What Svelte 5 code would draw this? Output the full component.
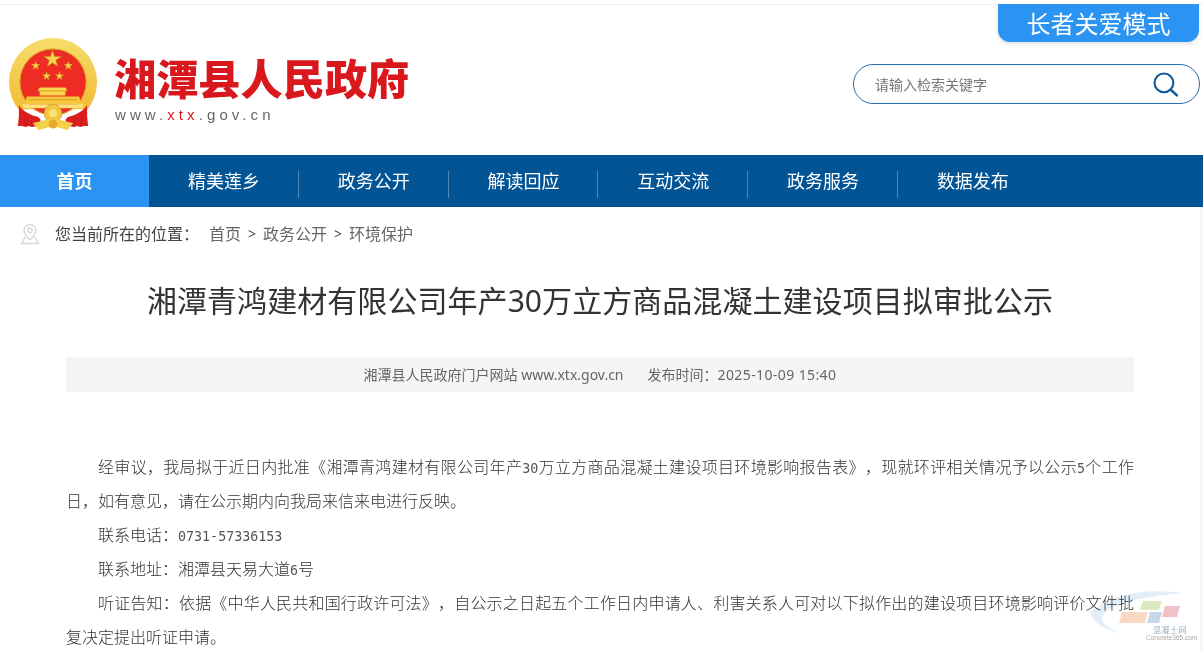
<!--
  Article page of the county government site: header, nav, breadcrumb, article body.
-->
<script>
    const navItems = ['精美莲乡', '政务公开', '解读回应', '互动交流', '政务服务', '数据发布'];
    const crumbs = ['首页', '政务公开', '环境保护'];

    // Five-pointed star as a polygon points string
    function star(cx, cy, r) {
        const pts = [];
        for (let i = 0; i < 10; i++) {
            const rad = i % 2 === 0 ? r : r * 0.382;
            const a = -Math.PI / 2 + (i * Math.PI) / 5;
            pts.push(`${(cx + rad * Math.cos(a)).toFixed(2)},${(cy + rad * Math.sin(a)).toFixed(2)}`);
        }
        return pts.join(' ');
    }

    const stars = [
        { x: 27, y: 28, r: 4.6 },
        { x: 60, y: 28, r: 4.6 },
        { x: 38, y: 38.500, r: 4.6 },
        { x: 51, y: 38.500, r: 4.6 },
    ];
</script>

<div class="page">
    <header class="top">
        <a class="care" href="#care">长者关爱模式</a>
        <div class="brand">
            <svg class="emblem" viewBox="0 0 90 96" aria-hidden="true">
                <defs>
                    <linearGradient id="gold" x1="0" y1="0" x2="0" y2="1">
                        <stop offset="0" stop-color="#f7dc6a" />
                        <stop offset="1" stop-color="#efb62c" />
                    </linearGradient>
                    <clipPath id="ring-clip"><rect x="0" y="0" width="90" height="72" /></clipPath>
                </defs>
                <g clip-path="url(#ring-clip)">
                    <circle cx="44.500" cy="44.500" r="44.500" fill="url(#gold)" />
                </g>
                <circle cx="44.500" cy="44.500" r="33.500" fill="#ee2c24" stroke="#dca325" stroke-width="1" />
                <polygon points={star(44, 21.500, 9)} fill="#f8d54a" stroke="#c58d1c" stroke-width=".5" />
                {#each stars as s}
                    <polygon points={star(s.x, s.y, s.r)} fill="#f8d54a" stroke="#c58d1c" stroke-width=".3" />
                {/each}
                <path fill="#f8d54a" d="M31 50h26l2 3h-2v5H31v-5h-2z" />
                <path fill="#f6c93c" d="M18 59h53l2 8H16z" />
                <path fill="#d8a024" d="M29 53h30v1H29zM20 62h49v1H20z" />
                <path fill="#fbe27a" d="M13 67h63l-2 4H15z" />
                <path fill="#dc1f1e" d="M10 68c5 7 12 10 20 12l2 3-3 6-6 1-3-1-3 1-4-1-4 0 1-10z" />
                <path fill="#dc1f1e" d="M79 68c-5 7-12 10-20 12l-2 3 3 6 6 1 3-1 3 1 4-1 4 0-1-10z" />
                <path fill="#b8141a" d="M15 74l1 15h1zM22 79l1 10h1zM74 74l-1 15h-1zM67 79l-1 10h-1z" />
                <circle cx="44.500" cy="76" r="9" fill="#f3c53e" stroke="#c58d1c" stroke-width="1" stroke-dasharray="2 1" />
                <circle cx="44.500" cy="76" r="4" fill="#fbe27a" />
                <path fill="#f6cf4a" d="M24 86c7-1 14-4 20.500-4S58 85 65 86l-6 7-14.500-4L30 93z" />
                <circle cx="44.500" cy="87" r="4.500" fill="#e8a92a" />
            </svg>
            <div class="brand-text">
                <div class="site-name">湘潭县人民政府</div>
                <div class="site-url">www.<span>xtx</span>.gov.cn</div>
            </div>
        </div>
        <form class="search">
            <span class="placeholder">请输入检索关键字</span>
            <svg viewBox="0 0 24 24" width="25" height="25" aria-hidden="true">
                <circle cx="10.500" cy="10.500" r="9" fill="none" stroke="#0f5a9e" stroke-width="2" />
                <path d="M17 17l6 5.500" fill="none" stroke="#0f5a9e" stroke-width="2.400" stroke-linecap="round" />
            </svg>
        </form>
    </header>

    <nav class="nav">
        <a class="nav-home" href="#home">首页</a>
        {#each navItems as item, i}
            <a class="nav-item" class:last={i === navItems.length - 1} href="#nav">{item}</a>
        {/each}
    </nav>

    <div class="crumbs">
        <svg viewBox="0 0 22 24" width="20" height="22" aria-hidden="true">
            <path d="M11 1.500a6.500 6.500 0 0 0-6.500 6.500c0 4.500 6.500 10.500 6.500 10.500S17.500 12.500 17.500 8A6.500 6.500 0 0 0 11 1.500z" fill="none" stroke="#d8d8d8" stroke-width="1.500" />
            <circle cx="11" cy="8" r="2.500" fill="none" stroke="#d8d8d8" stroke-width="1.500" />
            <path d="M6 15l-4.500 7.500h19L16 15" fill="none" stroke="#d8d8d8" stroke-width="1.500" />
        </svg>
        <span class="crumb-label">您当前所在的位置：</span>
        {#each crumbs as crumb, i}
            {#if i > 0}<span class="crumb-sep">&gt;</span>{/if}
            <a href="#crumb">{crumb}</a>
        {/each}
    </div>

    <main class="article">
        <h1>湘潭青鸿建材有限公司年产30万立方商品混凝土建设项目拟审批公示</h1>
        <div class="meta">
            <span>湘潭县人民政府门户网站 www.xtx.gov.cn</span>
            <span>发布时间：<span class="date">2025-10-09 15:40</span></span>
        </div>
        <div class="body">
            <p>经审议，我局拟于近日内批准《湘潭青鸿建材有限公司年产<span class="num">30</span>万立方商品混凝土建设项目环境影响报告表》，现就环评相关情况予以公示<span class="num">5</span>个工作日，如有意见，请在公示期内向我局来信来电进行反映。</p>
            <p>联系电话：<span class="num">0731-57336153</span></p>
            <p>联系地址：湘潭县天易大道<span class="num">6</span>号</p>
            <p>听证告知：依据《中华人民共和国行政许可法》，自公示之日起五个工作日内申请人、利害关系人可对以下拟作出的建设项目环境影响评价文件批复决定提出听证申请。</p>
        </div>
    </main>

    <div class="edge"></div>

    <svg class="watermark" viewBox="0 0 118 61" width="118" height="61" aria-hidden="true">
        <path d="M97 3C70-1 30 0 5 23c3 9 15 17 30 20-13-5-21-13-17-17C22 15 50 8 97 3z" fill="#e2eef9" />
        <polygon points="58,11 77,11 74,20 55,20" fill="#dbe8c0" />
        <polygon points="37,22 63,22 60,33 34,33" fill="#fad9c4" />
        <polygon points="65,22 77,22 74,33 62,33" fill="#c9d6ea" />
        <polygon points="80,16 95,16 92,27 77,27" fill="#f4c0c8" />
        <text x="68" y="43" class="wm-cn">混凝土网</text>
        <text x="61" y="50" class="wm-en">Concrete365.com</text>
    </svg>
</div>

<style>
    :global(body) {
        margin: 0;
        background: #fff;
    }
    .page {
        position: relative;
        width: 1203px;
        height: 651px;
        overflow: hidden;
        font-family: "Noto Sans", "Noto Sans CJK SC", sans-serif;
        color: #333;
    }
    a {
        color: inherit;
        text-decoration: none;
    }

    /* ── Header ── */
    .top {
        position: relative;
        box-sizing: border-box;
        margin-top: 4px;
        height: 151px;
        border-top: 1px solid #eee;
        display: flex;
        align-items: flex-start;
        justify-content: space-between;
        padding: 33px 3px 0 9px;
    }
    .care {
        position: absolute;
        top: -1px;
        right: 4px;
        width: 201px;
        height: 38px;
        background: #2b93f1;
        color: #fff;
        font-size: 24px;
        line-height: 40px;
        text-align: center;
        border-radius: 0 0 12px 12px;
        box-shadow: 0 2px 4px rgba(0, 0, 0, 0.12);
    }
    .brand {
        display: flex;
        align-items: flex-start;
        gap: 16px;
    }
    .emblem {
        width: 89px;
        height: 95px;
    }
    .brand-text {
        padding-top: 17px;
    }
    .site-name {
        font-size: 42.200px;
        line-height: 48px;
        font-weight: 900;
        color: #d9181e;
        white-space: nowrap;
    }
    .site-url {
        margin: 4px 0 0 1px;
        font-family: "Liberation Sans", sans-serif;
        font-size: 15px;
        line-height: 16px;
        letter-spacing: 4.100px;
        color: #666;
    }
    .site-url span {
        color: #d9181e;
    }
    .search {
        box-sizing: border-box;
        width: 347px;
        height: 40px;
        margin-top: 26px;
        border: 1px solid #2a6fb0;
        border-radius: 20px;
        display: flex;
        align-items: center;
        justify-content: space-between;
        padding: 0 21px 0 21px;
    }
    .placeholder {
        font-size: 14px;
        color: #757575;
    }

    /* ── Nav ── */
    .nav {
        display: flex;
        height: 52px;
        background: #035495;
        color: #fff;
        font-size: 18px;
        line-height: 52px;
    }
    .nav-home {
        width: 149px;
        text-align: center;
        background: #2b93f1;
        font-weight: 700;
    }
    .nav-item {
        position: relative;
        width: 149.800px;
        text-align: center;
    }
    .nav-item::after {
        content: "";
        position: absolute;
        right: 0;
        top: 16px;
        height: 27px;
        width: 1px;
        background: rgba(255, 255, 255, 0.3);
    }
    .nav-item.last::after {
        display: none;
    }

    /* ── Breadcrumb ── */
    .crumbs {
        display: flex;
        align-items: center;
        height: 54px;
        margin-top: -1px;
        padding-left: 20px;
        font-size: 16px;
        color: #666;
        gap: 7px;
    }
    .crumbs svg {
        margin-top: 1px;
    }
    .crumb-label {
        margin-left: 8px;
        margin-right: 3px;
        color: #444;
    }
    .crumb-sep {
        font-size: 14px;
        color: #444;
    }

    /* ── Article ── */
    .article {
        padding: 0 69px 0 66px;
    }
    h1 {
        margin: 19px 0 0;
        font-size: 30px;
        line-height: 44px;
        font-weight: 400;
        text-align: center;
        letter-spacing: 0.060px;
        color: #333;
    }
    .meta {
        display: flex;
        justify-content: center;
        gap: 24px;
        height: 35px;
        line-height: 35px;
        margin-top: 34px;
        background: #f5f5f5;
        font-size: 14px;
        color: #666;
    }
    .date {
        letter-spacing: 0.400px;
    }
    .body {
        margin-top: 58px;
        font-size: 16px;
        line-height: 34px;
        color: #333;
        font-weight: 300;
        text-align: justify;
        text-spacing-trim: space-all;
    }
    .body p {
        margin: 0;
        text-indent: 32px;
    }
    .num {
        font-family: "DejaVu Sans Mono", monospace;
        font-size: 13.330px;
        line-height: 0;
        color: #555;
    }

    /* Thin tinted strip along the right edge, below the nav */
    .edge {
        position: absolute;
        top: 207px;
        right: 0;
        bottom: 0;
        width: 3px;
        background: #f5f5fa;
    }

    /* ── Corner watermark over the page ── */
    .watermark {
        position: absolute;
        right: 0;
        bottom: 0;
        mix-blend-mode: multiply;
    }
    .wm-cn {
        font-size: 8px;
        letter-spacing: 0.500px;
        fill: #9fb0bd;
        font-family: "Noto Sans CJK SC", sans-serif;
    }
    .wm-en {
        font-size: 6.500px;
        fill: #a8a8a8;
        font-family: "Liberation Sans", sans-serif;
    }
</style>
